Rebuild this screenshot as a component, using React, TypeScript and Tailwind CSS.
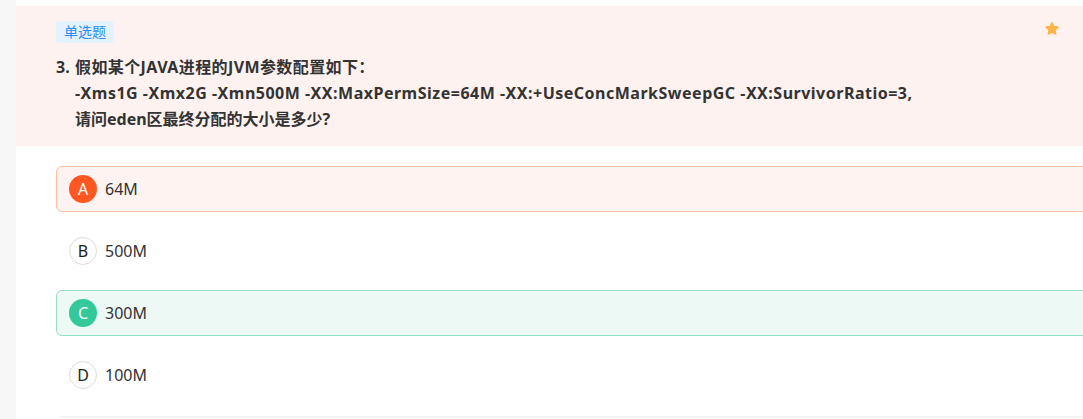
import React from "react";

const options = [
  { key: "A", text: "64M", state: "wrong" },
  { key: "B", text: "500M", state: "none" },
  { key: "C", text: "300M", state: "right" },
  { key: "D", text: "100M", state: "none" },
];

const Star = () => (
  <svg width="16" height="16" viewBox="0 0 24 24" className="mt-[2px] shrink-0">
    <path
      d="M12 2.8l2.7 5.6 6.1.8-4.4 4.3 1.1 6.1L12 16.7l-5.5 2.9 1.1-6.1-4.4-4.3 6.1-.8z"
      fill="#ffb547"
      stroke="#ffb547"
      strokeWidth="2.4"
      strokeLinejoin="round"
    />
  </svg>
);

const App = () => {
  return (
    <div
      className="flex w-[1083px] h-[419px] overflow-hidden bg-white"
      style={{ fontFamily: '"Noto Sans", "Noto Sans CJK SC", sans-serif' }}
    >
      <div className="w-4 shrink-0 bg-[#f7f7f7]" />
      <div className="min-w-0 flex-1 pt-[6px]">
        <div className="flex justify-between bg-[#fdf2ef] pl-10 pr-[23px] pt-[13px] pb-[14px]">
          <div>
            <span className="inline-block h-[22px] leading-[22px] rounded-[4px] bg-[#e3f2ff] px-2 text-[14px] text-[#2b8df7]">
              单选题
            </span>
            <div className="mt-[11px] flex text-[16px] font-bold leading-[26px] text-[#333]">
              <span className="w-[19px] shrink-0">3.</span>
              <div>
                <p className="tracking-[0.4px]">假如某个JAVA进程的JVM参数配置如下：</p>
                <p className="tracking-[0.5px]">
                  -Xms1G -Xmx2G -Xmn500M -XX:MaxPermSize=64M
                  -XX:+UseConcMarkSweepGC -XX:SurvivorRatio=3,
                </p>
                <p>请问eden区最终分配的大小是多少?</p>
              </div>
            </div>
          </div>
          <Star />
        </div>

        <div className="mt-5 flex flex-col gap-4 pl-10">
          {options.map((o) => (
            <div
              key={o.key}
              className={
                "flex h-[46px] w-[1060px] shrink-0 items-center gap-2 rounded-[6px] border pl-3 " +
                (o.state === "wrong"
                  ? "border-[#ffbea8] bg-[#fef3f0]"
                  : o.state === "right"
                  ? "border-[#93e2c6] bg-[#edf9f5]"
                  : "border-transparent bg-white")
              }
            >
              <span
                className={
                  "flex h-7 w-7 items-center justify-center rounded-full text-[16px] " +
                  (o.state === "wrong"
                    ? "bg-[#ff5722] text-white"
                    : o.state === "right"
                    ? "bg-[#34c99a] text-white"
                    : "border border-[#dddddd] bg-white text-[#222]")
                }
              >
                {o.key}
              </span>
              <span className="text-[16px] text-[#333]">{o.text}</span>
            </div>
          ))}
        </div>
        <div className="ml-[44px] mt-[18px] h-[2px] bg-[#f3f3f3]" />
      </div>
    </div>
  );
};

export default App;
